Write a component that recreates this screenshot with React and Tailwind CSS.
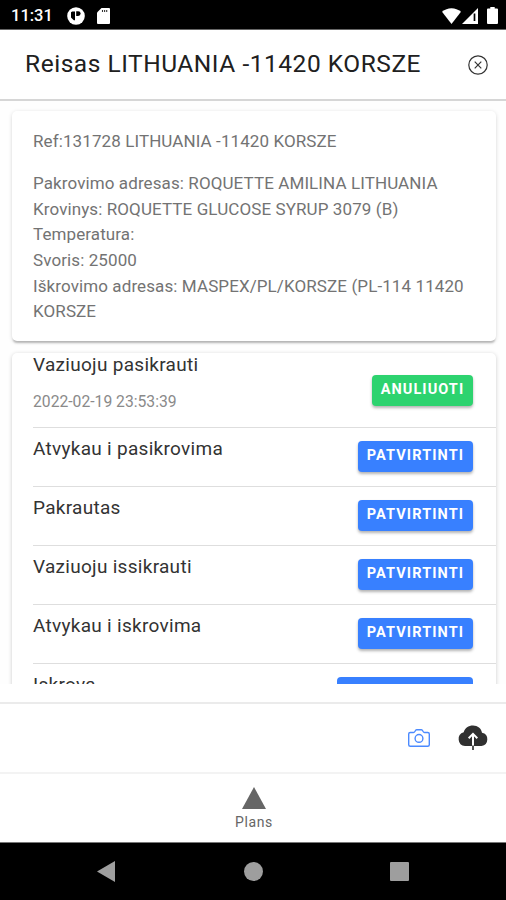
import React from "react";

const rows = [
  { title: "Atvykau i pasikrovima" },
  { title: "Pakrautas" },
  { title: "Vaziuoju issikrauti" },
  { title: "Atvykau i iskrovima" },
];

function Confirm() {
  return (
    <button className="h-[31px] w-[115px] rounded-[4px] bg-[#3880ff] pb-[2px] text-[14.5px] font-bold leading-[29px] tracking-[1.1px] text-white shadow-[0_2px_3px_rgba(0,0,0,0.3)]">
      PATVIRTINTI
    </button>
  );
}

function StatusBar() {
  return (
    <div className="flex h-[30px] shrink-0 items-center border-b border-[#666] bg-black pl-[11px] pr-[8px] pt-[2px] text-white">
      <span className="w-[43px] pt-[2px] text-[16.5px] font-medium leading-none">11:31</span>
      <svg className="ml-[13px]" width="18" height="18" viewBox="0 0 18 18">
        <circle cx="9" cy="9" r="8.8" fill="#fff" />
        <path d="M5.200 4.500H8v8.700H6.800L4 10.500V5.300z" fill="#000" />
        <path d="M9.200 4.200h2a2.400 2.400 0 0 1 0 4.800h-2z" fill="#000" />
      </svg>
      <svg className="ml-[12px]" width="13" height="16" viewBox="0 0 13 16">
        <path d="M4.500 0H12a1 1 0 0 1 1 1v14a1 1 0 0 1-1 1H1a1 1 0 0 1-1-1V4.500z" fill="#fff" />
        <path d="M5.500 2v2M7.600 2v2M9.700 2v2" stroke="#333" strokeWidth="1.1" />
      </svg>
      <div className="flex-1" />
      <svg width="19" height="16" viewBox="0 0 19 16">
        <path d="M0 3.800C5.400-1 13.600-1 19 3.800L9.500 16z" fill="#fff" />
      </svg>
      <svg className="ml-[1px]" width="16" height="16" viewBox="0 0 16 16">
        <path d="M16 0v16H0z" fill="#fff" />
        <path d="M12.500 5.500v7.500" stroke="#000" strokeWidth="1.7" />
      </svg>
      <svg className="ml-[9px]" width="11" height="17" viewBox="0 0 11 17">
        <path d="M3.300 0h4.400v1.500H10a1 1 0 0 1 1 1v13.500a1 1 0 0 1-1 1H1a1 1 0 0 1-1-1V2.500a1 1 0 0 1 1-1h2.300z" fill="#fff" />
      </svg>
    </div>
  );
}

export default function App() {
  return (
    <div className="flex h-[900px] w-[506px] flex-col overflow-hidden bg-white font-[Roboto,sans-serif]">
      <StatusBar />
      <header className="flex h-[69px] shrink-0 items-center justify-between pl-[25px] pr-[18px]">
        <h1 className="whitespace-nowrap text-[24.5px] font-normal tracking-[0.53px] text-[#202020]">
          Reisas LITHUANIA -11420 KORSZE
        </h1>
        <svg width="20" height="20" viewBox="0 0 20 20" fill="none" stroke="#333" strokeWidth="1.2">
          <circle cx="10" cy="10" r="9.2" />
          <path d="M6.700 6.700l6.600 6.600M13.300 6.700l-6.600 6.600" />
        </svg>
      </header>
      <main className="h-[585px] shrink-0 overflow-hidden border-t-2 border-[#d6d6d6] bg-[#fefefe] pl-[12px] pr-[10px] pt-[10px]">
        <section className="h-[230px] rounded-[5px] bg-white pl-[21px] pt-[18px] text-[17px] leading-[25.6px] tracking-[0.1px] text-[#737373] shadow-[0_3px_2px_-1px_rgba(0,0,0,0.22),0_1px_4px_rgba(0,0,0,0.14)]">
          <p className="mb-[16.6px]">Ref:131728 LITHUANIA -11420 KORSZE</p>
          <p>Pakrovimo adresas: ROQUETTE AMILINA LITHUANIA</p>
          <p>Krovinys: ROQUETTE GLUCOSE SYRUP 3079 (B)</p>
          <p>Temperatura:</p>
          <p>Svoris: 25000</p>
          <p>Iškrovimo adresas: MASPEX/PL/KORSZE (PL-114 11420</p>
          <p>KORSZE</p>
        </section>
        <section className="mt-[12px] h-[400px] rounded-[5px] bg-white pl-[21px] text-[19px] tracking-[0.29px] text-[#333] shadow-[0_1px_4px_rgba(0,0,0,0.2)]">
          <div className="flex h-[74.500px] justify-between border-b border-[#dedede] pr-[23px]">
            <div>
              <p className="leading-[24px]">Vaziuoju pasikrauti</p>
              <p className="mt-[15px] text-[15.7px] leading-[20px] tracking-normal text-[#8a8a8a]">2022-02-19 23:53:39</p>
            </div>
            <button className="mt-[22px] h-[31px] w-[101px] rounded-[4px] bg-[#2dd36f] pb-[2px] text-[14.5px] font-bold leading-[29px] tracking-[1.05px] text-white shadow-[0_2px_3px_rgba(0,0,0,0.3)]">
              ANULIUOTI
            </button>
          </div>
          {rows.map((r) => (
            <div key={r.title} className="flex h-[59.1px] items-center justify-between border-b border-[#dedede] pr-[23px]">
              <p className="pb-[16px] leading-[24px]">{r.title}</p>
              <Confirm />
            </div>
          ))}
          <div className="flex justify-between pr-[23px] pt-[9px]">
            <p className="leading-[24px]">Iskrova</p>
            <div className="mt-[4px] h-[31px] w-[136px] rounded-[4px] bg-[#3880ff]" />
          </div>
        </section>
      </main>
      <div className="h-[18px] shrink-0" />
      <div className="flex h-[70px] shrink-0 items-center justify-end border-t-2 border-[#ebebeb] pb-px pr-[18px]">
        <svg width="22" height="18" viewBox="0 0 22 18" fill="none" stroke="#4b8aff" strokeWidth="1.4">
          <path d="M2.300 3.500h3.200c.7 0 1-.3 1.400-1l.6-1c.3-.5.7-.8 1.300-.8h4.400c.6 0 1 .3 1.300.8l.6 1c.4.7.7 1 1.400 1h3.200c1 0 1.600.6 1.600 1.500v10.700c0 1-.6 1.500-1.600 1.500H2.300c-1 0-1.600-.6-1.600-1.500V5c0-.9.6-1.500 1.600-1.500z" />
          <circle cx="11" cy="9.400" r="3.900" />
        </svg>
        <svg className="ml-[28px]" width="30" height="25" viewBox="0 0 30 25">
          <path d="M7 21a7 7 0 0 1-1.300-13.700C6.800 3 10.500 .5 15 .5c4.700 0 8.300 3 9 7.300A6.700 6.700 0 0 1 23.500 21z" fill="#303030" />
          <path d="M15 21V9M10.700 13.200 15 8.900l4.300 4.300" fill="none" stroke="#fff" strokeWidth="2" />
          <path d="M15 20.500v4.500" stroke="#555" strokeWidth="2" />
        </svg>
      </div>
      <div className="flex h-[70px] shrink-0 flex-col items-center border-t-2 border-[#f3f3f3] pl-[2px] pt-[13px] text-[#666]">
        <svg width="24" height="22" viewBox="0 0 24 22">
          <path d="M12 0l12 22H0z" fill="#666" />
        </svg>
        <span className="mt-[4px] text-[14px] leading-[18px] tracking-[0.6px]">Plans</span>
      </div>
      <nav className="flex h-[58px] shrink-0 items-center border-t border-[#777] bg-black pl-[97px]">
        <svg width="18" height="21" viewBox="0 0 18 21">
          <path d="M18 0v21L0 10.500z" fill="#9e9e9e" />
        </svg>
        <div className="ml-[129px] size-[19px] rounded-full bg-[#9e9e9e]" />
        <div className="ml-[127px] size-[19px] rounded-[1px] bg-[#9e9e9e]" />
      </nav>
    </div>
  );
}
